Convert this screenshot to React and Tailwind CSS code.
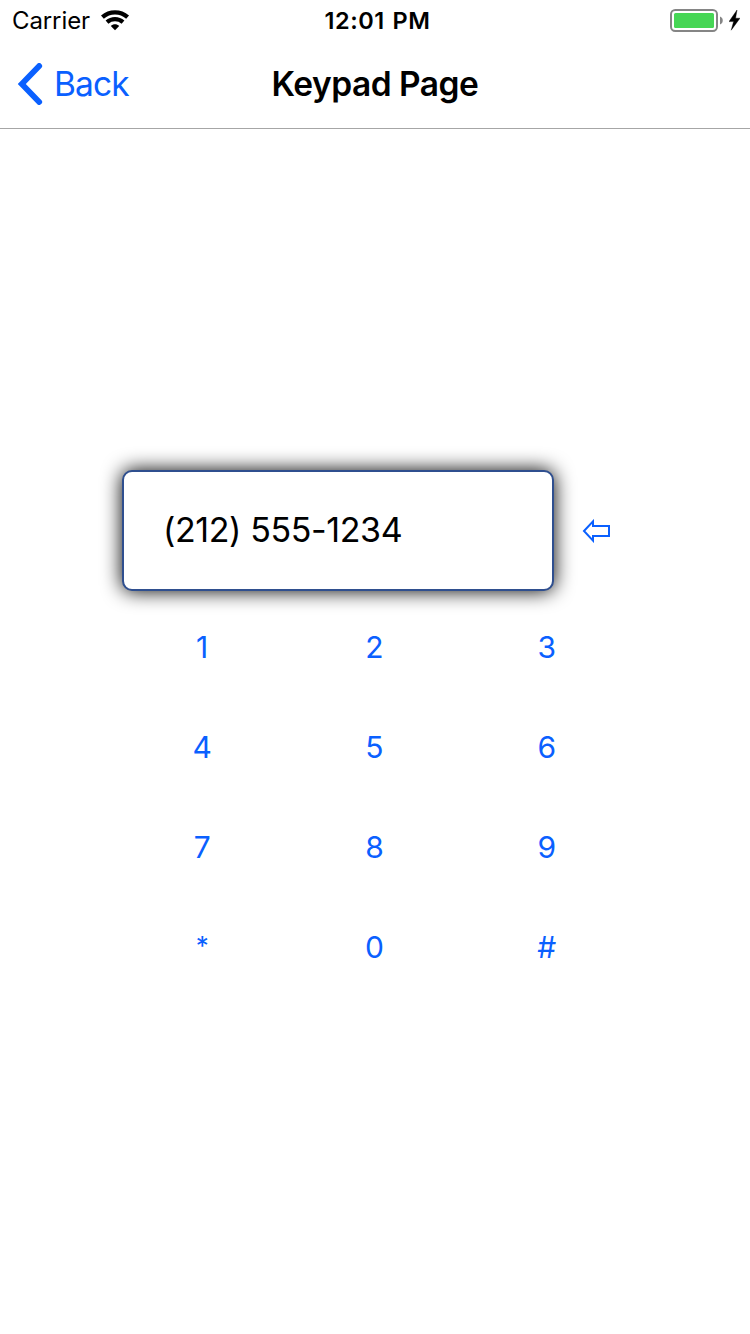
const KEYS = ['1', '2', '3', '4', '5', '6', '7', '8', '9', '*', '0', '#'];

function WifiIcon() {
  return (
    <svg className="mb-0.5 ml-[11px] h-[21px] w-[29px]" viewBox="0 0 29 21" fill="none" stroke="black">
      <path d="M1.4 7.2 C8.6 0.8 19.4 0.8 26.6 7.2" strokeWidth="4.3" />
      <path d="M6 12.1 C10.6 8.1 17.4 8.1 22 12.1" strokeWidth="4.3" />
      <path d="M14 20.2 L9.8 16 C12 13.8 16 13.8 18.2 16 Z" fill="black" stroke="none" />
    </svg>
  );
}

function BatteryIcon() {
  return (
    <svg className="h-[24px] w-[54px]" viewBox="0 0 54 24">
      <rect x="1" y="1" width="46" height="21" rx="4.2" fill="white" stroke="#858585" strokeWidth="2" />
      <rect x="4" y="4" width="40" height="15" rx="1.5" fill="#46d655" />
      <path d="M50 7.5 C53.7 8.7 53.7 14.3 50 15.5 Z" fill="#858585" />
    </svg>
  );
}

function BoltIcon() {
  return (
    <svg className="mb-0.5 ml-[5px] h-[21px] w-[11px]" viewBox="0 0 11 21">
      <path d="M8 0 L0 11.6 H4.6 L2.2 20.2 L11 8.2 H6.6 Z" fill="black" stroke="black" strokeWidth="0.4" />
    </svg>
  );
}

function StatusBar() {
  return (
    <div className="grid h-10 grid-cols-3 items-center pt-0.5 text-[24px] leading-none">
      <div className="flex items-center pl-3">
        <span className="w-[78px] whitespace-nowrap tracking-[-0.1px]">Carrier</span>
        <WifiIcon />
      </div>
      <span className="whitespace-nowrap pl-[5px] text-center text-[23.5px] font-semibold tracking-[0.5px] [word-spacing:1.5px]">12:01 PM</span>
      <div className="flex items-center justify-end pr-[10px]">
        <BatteryIcon />
        <BoltIcon />
      </div>
    </div>
  );
}

function NavBar() {
  return (
    <header className="grid h-[89px] grid-cols-[1fr_auto_1fr] items-center border-b border-[#a6a6a6] text-[34px] leading-none">
      <button className="flex items-center pl-[17px] text-[#0a60ff]">
        <svg className="h-[42px] w-[26px]" viewBox="0 0 26 42" fill="none" stroke="currentColor" strokeWidth="5.8" strokeLinecap="round" strokeLinejoin="miter">
          <path d="M22.2 3 L4.8 21 L22.2 39" />
        </svg>
        <span className="ml-[11px] whitespace-nowrap pt-px text-[33.5px] tracking-[-0.9px]">Back</span>
      </button>
      <h1 className="whitespace-nowrap pt-px text-[33.5px] font-semibold tracking-[-0.5px]">Keypad Page</h1>
      <span />
    </header>
  );
}

export default function App() {
  return (
    <div className="flex h-[1334px] w-[750px] flex-col bg-white font-['Inter','Liberation_Sans',sans-serif] text-black">
      <StatusBar />
      <NavBar />
      <main className="flex flex-col pl-[122px] pt-[341px]">
        <div className="flex items-center">
          <div className="flex h-[121px] w-[432px] items-center rounded-[10px] border-2 border-[#2f4f8f] bg-white pl-[39px] text-[34px] leading-none shadow-[0_0_20px_rgba(0,0,0,1)]">
            <span className="whitespace-nowrap pb-0.5 tracking-[-0.4px]">(212) 555-1234</span>
          </div>
          <button className="ml-3 flex h-[88px] w-[60px] items-center justify-center text-[#0a60ff]">
            <svg className="h-6 w-7" viewBox="0 0 28 24" fill="none" stroke="currentColor" strokeWidth="2">
              <path d="M2 12 L11 2.4 V7 H27 V17 H11 V21.6 Z" />
            </svg>
          </button>
        </div>
        <div className="mt-3 grid w-[505px] auto-rows-[88px] grid-cols-3 gap-3">
          {KEYS.map((key) => (
            <button
              key={key}
              className={`flex items-center justify-center leading-none text-[#0a60ff] ${key === '*' ? 'pb-0.5 text-[26px]' : 'pb-px text-[30px]'}`}
            >
              {key}
            </button>
          ))}
        </div>
      </main>
    </div>
  );
}
